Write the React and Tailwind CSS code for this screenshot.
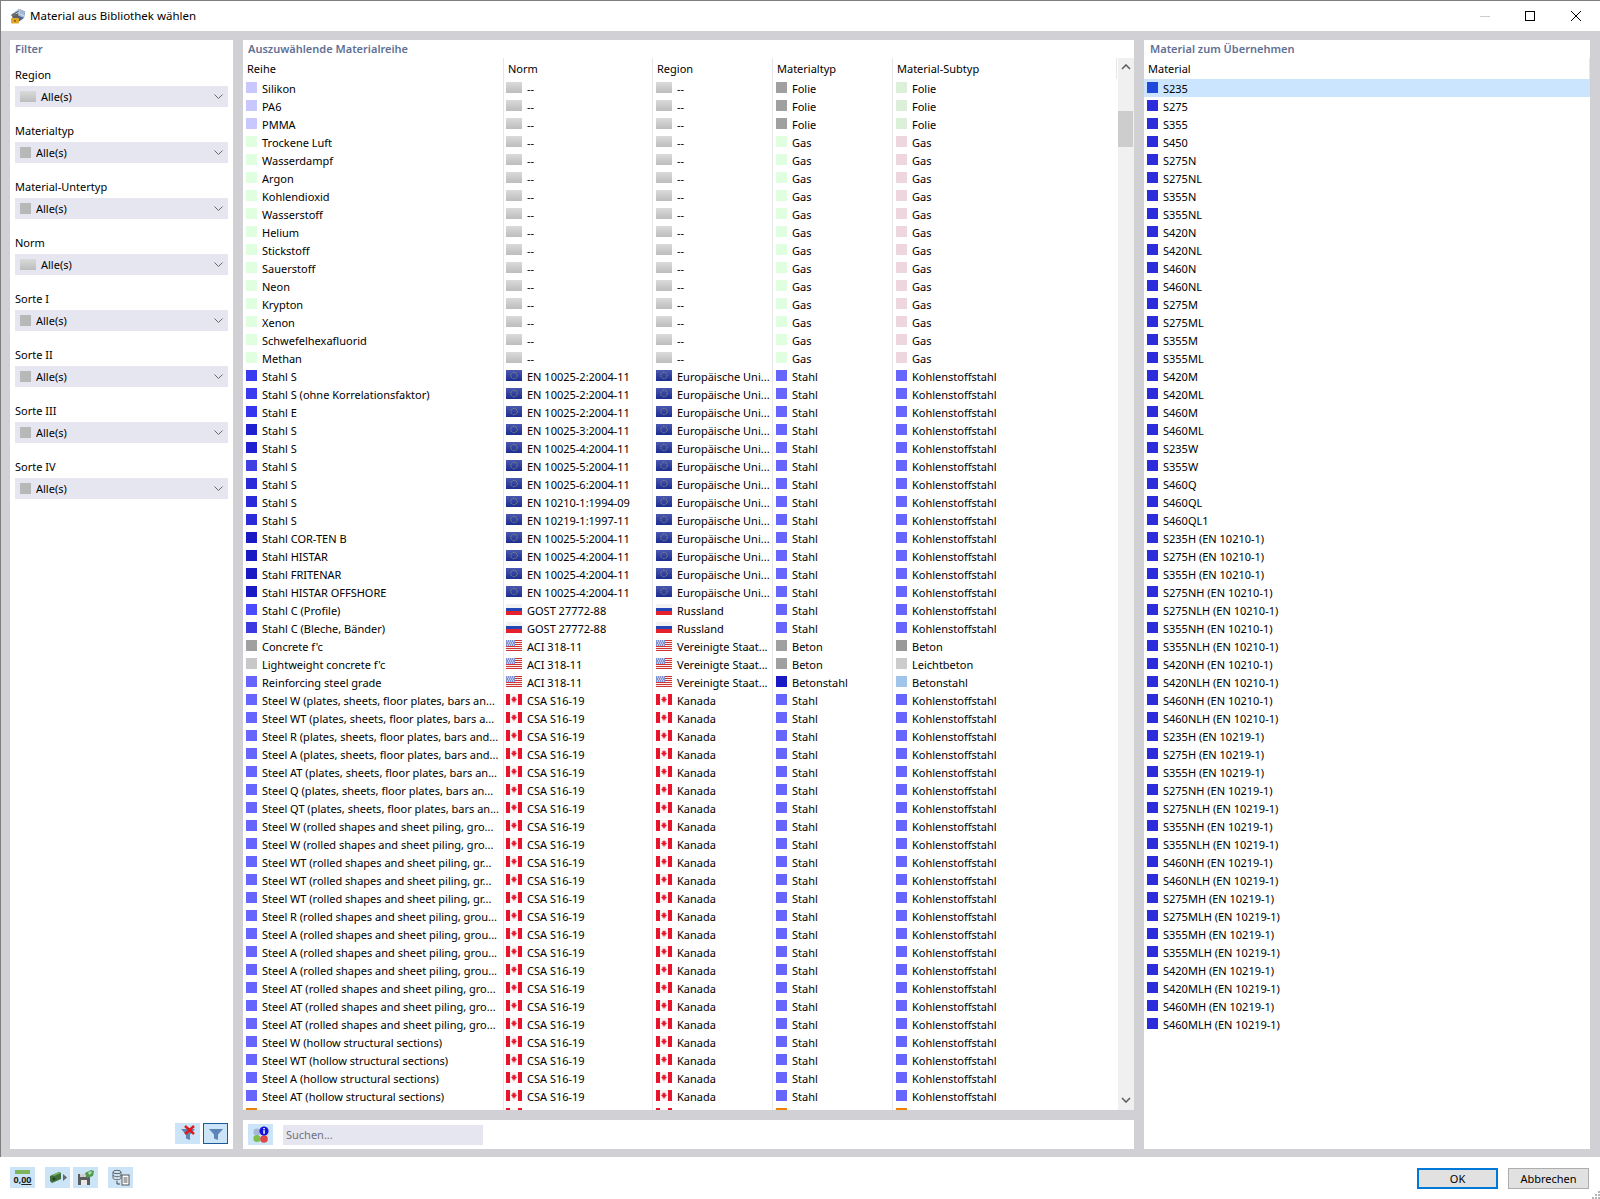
import React from 'react';

const filters = [
  { label: 'Region', icon: 'blank' },
  { label: 'Materialtyp' },
  { label: 'Material-Untertyp' },
  { label: 'Norm', icon: 'blank' },
  { label: 'Sorte I' },
  { label: 'Sorte II' },
  { label: 'Sorte III' },
  { label: 'Sorte IV' },
];

const GAS = ['Trockene Luft', 'Wasserdampf', 'Argon', 'Kohlendioxid', 'Wasserstoff', 'Helium', 'Stickstoff', 'Sauerstoff', 'Neon', 'Krypton', 'Xenon', 'Schwefelhexafluorid', 'Methan'];

const eu = (name, color, norm) => ({ name, color, norm, flag: 'eu', region: 'Europäische Uni...', type: 'Stahl', sub: 'Kohlenstoffstahl' });
const ca = (name) => ({ name, color: '#6666ff', norm: 'CSA S16-19', flag: 'ca', region: 'Kanada', type: 'Stahl', sub: 'Kohlenstoffstahl' });

const rows = [
  ...['Silikon', 'PA6', 'PMMA'].map((name) => ({ name, color: '#c8c8ff', norm: '--', flag: 'blank', region: '--', type: 'Folie', sub: 'Folie' })),
  ...GAS.map((name) => ({ name, color: '#e0ffe0', norm: '--', flag: 'blank', region: '--', type: 'Gas', sub: 'Gas' })),
  eu('Stahl S', '#3a3aee', 'EN 10025-2:2004-11'),
  eu('Stahl S (ohne Korrelationsfaktor)', '#3a3aee', 'EN 10025-2:2004-11'),
  eu('Stahl E', '#3535f0', 'EN 10025-2:2004-11'),
  eu('Stahl S', '#2020d0', 'EN 10025-3:2004-11'),
  eu('Stahl S', '#2020d0', 'EN 10025-4:2004-11'),
  eu('Stahl S', '#4040e0', 'EN 10025-5:2004-11'),
  eu('Stahl S', '#2a2ad8', 'EN 10025-6:2004-11'),
  eu('Stahl S', '#2a2ad8', 'EN 10210-1:1994-09'),
  eu('Stahl S', '#2a2ad8', 'EN 10219-1:1997-11'),
  eu('Stahl COR-TEN B', '#1a1ac4', 'EN 10025-5:2004-11'),
  eu('Stahl HISTAR', '#1a1ac4', 'EN 10025-4:2004-11'),
  eu('Stahl FRITENAR', '#1a1ac4', 'EN 10025-4:2004-11'),
  eu('Stahl HISTAR OFFSHORE', '#1a1ac4', 'EN 10025-4:2004-11'),
  { name: 'Stahl C (Profile)', color: '#4a4aff', norm: 'GOST 27772-88', flag: 'ru', region: 'Russland', type: 'Stahl', sub: 'Kohlenstoffstahl' },
  { name: 'Stahl C (Bleche, Bänder)', color: '#3a3ae0', norm: 'GOST 27772-88', flag: 'ru', region: 'Russland', type: 'Stahl', sub: 'Kohlenstoffstahl' },
  { name: "Concrete f'c", color: '#a0a0a0', norm: 'ACI 318-11', flag: 'us', region: 'Vereinigte Staat...', type: 'Beton', sub: 'Beton' },
  { name: "Lightweight concrete f'c", color: '#c8c8c8', norm: 'ACI 318-11', flag: 'us', region: 'Vereinigte Staat...', type: 'Beton', sub: 'Leichtbeton' },
  { name: 'Reinforcing steel grade', color: '#6666ff', norm: 'ACI 318-11', flag: 'us', region: 'Vereinigte Staat...', type: 'Betonstahl', sub: 'Betonstahl' },
  ...[
    'Steel W (plates, sheets, floor plates, bars an...',
    'Steel WT (plates, sheets, floor plates, bars a...',
    'Steel R (plates, sheets, floor plates, bars and...',
    'Steel A (plates, sheets, floor plates, bars and...',
    'Steel AT (plates, sheets, floor plates, bars an...',
    'Steel Q (plates, sheets, floor plates, bars an...',
    'Steel QT (plates, sheets, floor plates, bars an...',
    'Steel W (rolled shapes and sheet piling, gro...',
    'Steel W (rolled shapes and sheet piling, gro...',
    'Steel WT (rolled shapes and sheet piling, gr...',
    'Steel WT (rolled shapes and sheet piling, gr...',
    'Steel WT (rolled shapes and sheet piling, gr...',
    'Steel R (rolled shapes and sheet piling, grou...',
    'Steel A (rolled shapes and sheet piling, grou...',
    'Steel A (rolled shapes and sheet piling, grou...',
    'Steel A (rolled shapes and sheet piling, grou...',
    'Steel AT (rolled shapes and sheet piling, gro...',
    'Steel AT (rolled shapes and sheet piling, gro...',
    'Steel AT (rolled shapes and sheet piling, gro...',
    'Steel W (hollow structural sections)',
    'Steel WT (hollow structural sections)',
    'Steel A (hollow structural sections)',
    'Steel AT (hollow structural sections)',
  ].map(ca),
  // row cut off by the panel edge, only the top of the swatches shows
  { name: '', color: '#e8820c', norm: '', flag: 'ca', region: '', type: '', sub: '' },
];

const typeColor = { Folie: '#a0a0a0', Gas: '#e0ffe0', Stahl: '#6666ff', Beton: '#a0a0a0', Betonstahl: '#1a1ac4', '': '#f08000' };
const subColor = { Folie: '#dcefd8', Gas: '#eed6de', Kohlenstoffstahl: '#6666ff', Beton: '#999999', Leichtbeton: '#cccccc', Betonstahl: '#a0c4ea', '': '#f08000' };

const h1 = ['S235', 'S275', 'S355', 'S450', 'S275N', 'S275NL', 'S355N', 'S355NL', 'S420N', 'S420NL', 'S460N', 'S460NL', 'S275M', 'S275ML', 'S355M', 'S355ML', 'S420M', 'S420ML', 'S460M', 'S460ML', 'S235W', 'S355W', 'S460Q', 'S460QL', 'S460QL1'];
const h2 = ['S235H', 'S275H', 'S355H', 'S275NH', 'S275NLH', 'S355NH', 'S355NLH', 'S420NH', 'S420NLH', 'S460NH', 'S460NLH'].map((s) => `${s} (EN 10210-1)`);
const h3 = ['S235H', 'S275H', 'S355H', 'S275NH', 'S275NLH', 'S355NH', 'S355NLH', 'S460NH', 'S460NLH', 'S275MH', 'S275MLH', 'S355MH', 'S355MLH', 'S420MH', 'S420MLH', 'S460MH', 'S460MLH'].map((s) => `${s} (EN 10219-1)`);
const materials = [...h1, ...h2, ...h3];

function Flag({ kind }) {
  if (kind === 'blank') {
    return <div className="w-[16px] h-[11px] shrink-0 bg-gradient-to-b from-[#dadada] to-[#bdbdbd]" />;
  }
  if (kind === 'ru') {
    return (
      <svg width="16" height="11" viewBox="0 0 16 11" className="shrink-0">
        <rect width="16" height="4" fill="#f2f2f2" />
        <rect y="4" width="16" height="3" fill="#2447b8" />
        <rect y="7" width="16" height="4" fill="#e3202c" />
      </svg>
    );
  }
  if (kind === 'us') {
    return (
      <svg width="16" height="11" viewBox="0 0 16 11" className="shrink-0">
        <rect width="16" height="11" fill="#f7eeee" />
        <rect y="0" width="16" height="1" fill="#cf3434" />
        <rect y="2" width="16" height="1" fill="#cf3434" />
        <rect y="4" width="16" height="1" fill="#cf3434" />
        <rect y="6" width="16" height="1" fill="#cf3434" />
        <rect y="8" width="16" height="1" fill="#cf3434" />
        <rect y="10" width="16" height="1" fill="#cf3434" />
        <rect width="9" height="6" fill="#8092d2" />
        <path d="M1 1h1M3 1h1M5 1h1M7 1h1M2 3h1M4 3h1M6 3h1M1 5h1M3 5h1M5 5h1M7 5h1" stroke="#ffffff" strokeWidth="1" />
      </svg>
    );
  }
  if (kind === 'ca') {
    return (
      <svg width="16" height="11" viewBox="0 0 16 11" className="shrink-0">
        <rect width="16" height="11" fill="#fbf4f4" />
        <rect width="4" height="11" fill="#e8142c" />
        <rect x="12" width="4" height="11" fill="#e8142c" />
        <path d="M8 2l.8 1.4 1-.4-.3 2 1-.3.3.9-1.3 1 .2.8H8.3V9h-.6V7.4H6.3l.2-.8-1.3-1 .3-.9 1 .3-.3-2 1 .4z" fill="#e8142c" />
      </svg>
    );
  }
  return (
    <svg width="16" height="11" viewBox="0 0 16 11" className="shrink-0">
      <defs>
        <linearGradient id="euBlue" x1="0" y1="0" x2="0" y2="1">
          <stop offset="0" stopColor="#4a58b0" />
          <stop offset="1" stopColor="#1c2d92" />
        </linearGradient>
      </defs>
      <rect width="16" height="11" fill="url(#euBlue)" />
      <circle cx="8" cy="5.5" r="3.2" fill="none" stroke="#9c9a66" strokeWidth="0.9" strokeDasharray="1 0.7" />
    </svg>
  );
}

const Swatch = ({ color }) => (
  <div className="w-[11px] h-[11px] shrink-0" style={{ background: color }} />
);

function Cell({ first, pad, children }) {
  return (
    <div className={`flex items-start overflow-hidden whitespace-nowrap h-[18px] pt-[3px] ${first ? '' : 'border-l border-[#e6e6e6]'} ${pad}`}>
      {children}
    </div>
  );
}

// text sits a little lower than the swatch next to it
const Label = ({ children }) => <span className="leading-[12px] mt-px">{children}</span>;

function Row({ row }) {
  return (
    <div className="grid grid-cols-[260px_149px_120px_120px_226px] h-[18px]">
      <Cell first pad="pl-[3px] gap-[5px]">
        <Swatch color={row.color} />
        <Label>{row.name}</Label>
      </Cell>
      <Cell pad="pl-[2px] gap-[5px]">
        <Flag kind={row.flag} />
        <Label>{row.norm}</Label>
      </Cell>
      <Cell pad="pl-[3px] gap-[5px]">
        <Flag kind={row.flag} />
        <Label>{row.region}</Label>
      </Cell>
      <Cell pad="pl-[3px] gap-[5px]">
        <Swatch color={typeColor[row.type]} />
        <Label>{row.type}</Label>
      </Cell>
      <Cell pad="pl-[3px] gap-[5px]">
        <Swatch color={subColor[row.sub]} />
        <Label>{row.sub}</Label>
      </Cell>
    </div>
  );
}

const Chevron = ({ up, color = '#5f5f5f' }) => (
  <svg width="10" height="6" viewBox="0 0 10 6" fill="none">
    <path d={up ? 'M1 5l4-4 4 4' : 'M1 1l4 4 4-4'} stroke={color} strokeWidth="1.6" />
  </svg>
);

function Combo({ item }) {
  return (
    <div className="h-[21px] bg-[#e6e6f0] flex items-center pl-[5px] pr-[5px] gap-[5px]">
      {item.icon === 'blank' ? <Flag kind="blank" /> : <Swatch color="#b8b8b8" />}
      <span className="flex-1">Alle(s)</span>
      <svg width="9" height="5" viewBox="0 0 9 5" fill="none">
        <path d="M.5.5l4 4 4-4" stroke="#6a6a6a" strokeWidth="1" />
      </svg>
    </div>
  );
}

const PanelTitle = ({ children, className = '' }) => (
  <div className={`h-[18px] leading-[17px] font-semibold text-[#5f7096] ${className}`}>{children}</div>
);

const IconButton = ({ active, children }) => (
  <div className={`w-[25px] h-[21px] flex items-center justify-center bg-[#cce4f7] ${active ? 'border border-[#1a5a96]' : ''}`}>
    {children}
  </div>
);

const Funnel = () => (
  <svg width="16" height="15" viewBox="0 0 16 15">
    <path d="M1 3h14l-5 5.5V14l-4-1.5v-4z" fill="#5c84b8" />
  </svg>
);

function AppIcon() {
  return (
    <svg width="17" height="16" viewBox="0 0 17 16">
      <path d="M2 7l8-6 6 2.5L15 10l-7 5z" fill="#4f6485" />
      <path d="M10 1l6 2.5L15 10 9 7.5z" fill="#a4b8d2" />
      <path d="M4 5l7-3.5M3.5 8L11 3.5M9.5 5.5l6 2.5" stroke="#dfe7f0" strokeWidth="0.8" fill="none" />
      <rect x="2" y="10" width="8" height="5.5" rx="1" fill="#e0a92a" />
      <path d="M4 10V8.5a2 2 0 014 0V10" stroke="#7a6010" fill="none" />
      <rect x="5.2" y="12" width="1.6" height="1.6" fill="#6b5208" />
    </svg>
  );
}

export default function App() {
  return (
    <div className="w-[1600px] h-[1199px] relative flex flex-col bg-white text-[11px] leading-[18px] text-black font-['Noto_Sans','Open_Sans',sans-serif] overflow-hidden">
      <div className="flex flex-col flex-1 min-h-0 border-l border-t border-[#7f7f7f]">
        {/* title bar */}
        <div className="h-[30px] shrink-0 flex items-center pl-[8px] pr-[19px]">
          <AppIcon />
          <span className="ml-[4px] flex-1 text-[11.5px] leading-[32px]">Material aus Bibliothek wählen</span>
          <div className="w-[10px] h-px bg-[#cccccc]" />
          <div className="w-[10px] h-[10px] border border-black ml-[35px]" />
          <svg width="10" height="10" viewBox="0 0 10 10" className="ml-[36px]">
            <path d="M0 0l10 10M10 0L0 10" stroke="#000" strokeWidth="1" />
          </svg>
        </div>

        {/* body */}
        <div className="flex-1 min-h-0 flex gap-[10px] bg-[#d1d0d5] pl-[9px] pr-[10px] pt-[9px] pb-[8px]">
          <div className="w-[223px] shrink-0 bg-white flex flex-col px-[5px]">
            <PanelTitle>Filter</PanelTitle>
            <div className="mt-[7px] flex flex-col gap-[14px]">
              {filters.map((item) => (
                <div key={item.label}>
                  <div className="h-[21px] leading-[20px]">{item.label}</div>
                  <Combo item={item} />
                </div>
              ))}
            </div>
            <div className="mt-auto mb-[5px] flex justify-end gap-[3px]">
              <div className="relative">
                <IconButton><Funnel /></IconButton>
                <svg width="11" height="10" viewBox="0 0 11 10" className="absolute top-[2px] right-[5px]">
                  <path d="M1 1l9 8M10 1L1 9" stroke="#e01818" strokeWidth="2.4" />
                </svg>
              </div>
              <IconButton active><Funnel /></IconButton>
            </div>
          </div>

          <div className="w-[891px] shrink-0 flex flex-col gap-[10px]">
            <div className="h-[1070px] bg-white flex flex-col overflow-hidden">
              <PanelTitle className="pl-[5px]">Auszuwählende Materialreihe</PanelTitle>
              <div className="flex flex-1 min-h-0">
                <div className="w-[875px] overflow-hidden">
                  <div className="grid grid-cols-[260px_149px_120px_120px_226px] h-[21px]">
                    {['Reihe', 'Norm', 'Region', 'Materialtyp', 'Material-Subtyp'].map((col, i) => (
                      <div key={col} className={`h-[21px] leading-[21px] pl-[4px] ${i > 0 ? 'border-l border-[#e6e6e6]' : ''} ${i === 4 ? 'border-r mr-[1px]' : ''}`}>
                        {col}
                      </div>
                    ))}
                  </div>
                  {rows.map((row, i) => (
                    <Row key={i} row={row} />
                  ))}
                </div>
                <div className="w-[16px] bg-[#f0f0f0] flex flex-col">
                  <div className="h-[18px] flex items-center justify-center"><Chevron up /></div>
                  <div className="h-[35px]" />
                  <div className="h-[36px] w-[15px] bg-[#cdcdcd]" />
                  <div className="flex-1" />
                  <div className="h-[18px] mb-[1px] flex items-center justify-center"><Chevron up={false} /></div>
                </div>
              </div>
            </div>

            <div className="h-[29px] bg-white flex items-center pl-[5px] gap-[10px]">
              <IconButton>
                <svg width="18" height="18" viewBox="0 0 18 18">
                  <circle cx="5" cy="6" r="3.6" fill="#a9b6d8" />
                  <circle cx="5" cy="12.5" r="3.6" fill="#7cc04a" />
                  <circle cx="12" cy="13" r="3.8" fill="#e04848" />
                  <circle cx="12" cy="5" r="4.6" fill="#1414e0" />
                  <rect x="11.3" y="4.2" width="1.5" height="3.6" fill="#fff" />
                  <rect x="11.3" y="2" width="1.5" height="1.4" fill="#fff" />
                </svg>
              </IconButton>
              <div className="w-[200px] h-[20px] bg-[#e6e6f0] pl-[3px] leading-[20px] text-[#6f7280]">Suchen...</div>
            </div>
          </div>

          <div className="flex-1 bg-white flex flex-col overflow-hidden">
            <PanelTitle className="pl-[6px]">Material zum Übernehmen</PanelTitle>
            <div className="h-[21px] leading-[21px] pl-[4px] border-r border-[#e6e6e6]">Material</div>
            {materials.map((name, i) => (
              <div key={i} className={`h-[18px] flex items-start pt-[3px] pl-[3px] gap-[5px] whitespace-nowrap ${i === 0 ? 'bg-[#cce5ff]' : ''}`}>
                <Swatch color={i === 0 ? '#1f48dc' : '#2c2cdc'} />
                <Label>{name}</Label>
              </div>
            ))}
          </div>
        </div>
      </div>

      {/* footer */}
      <div className="h-[42px] shrink-0 flex items-start pt-[10px] pl-[10px] pr-[11px]">
        <IconButton>
          <div className="flex flex-col items-center">
            <div className="w-[15px] h-[4px] bg-[#7fb55a]" />
            <span className="text-[9px] leading-[11px] font-bold text-[#222]">0,<span className="underline">00</span></span>
          </div>
        </IconButton>
        <div className="ml-[10px]">
          <IconButton>
            <svg width="18" height="13" viewBox="0 0 18 13">
              <path d="M1 5l9-4 2 1v6l-9 4-2-2z" fill="#3f6f3a" />
              <path d="M3 4l7-3 2 1-7 3z" fill="#75b35c" />
              <circle cx="5" cy="8" r="1.4" fill="#23401f" />
              <path d="M14 3l4 3.5-4 3.5z" fill="#666" />
            </svg>
          </IconButton>
        </div>
        <div className="ml-[3px]">
          <IconButton>
            <svg width="18" height="17" viewBox="0 0 18 17">
              <path d="M1 5h10l2 2v9H1z" fill="#5d5d5d" />
              <rect x="4" y="11" width="6" height="5" fill="#e8e8e8" />
              <rect x="3" y="5" width="6" height="3" fill="#cfcfcf" />
              <path d="M8 4l6-3 3 1-1 5-6 2z" fill="#4f9a50" />
              <path d="M11 3l3-1 1 2-3 2z" fill="#a8dba0" />
            </svg>
          </IconButton>
        </div>
        <div className="ml-[10px]">
          <IconButton>
            <svg width="20" height="18" viewBox="0 0 20 18" fill="none">
              <ellipse cx="6" cy="3" rx="4" ry="1.7" stroke="#666" />
              <path d="M2 3v6c0 1 2 1.7 4 1.7s4-.7 4-1.7V3M2 6c0 1 2 1.7 4 1.7S10 7 10 6" stroke="#666" />
              <path d="M6 12v3h3" stroke="#444" />
              <rect x="11" y="6" width="7" height="10" fill="#fff" stroke="#555" />
              <path d="M12.5 9h4M12.5 11h4M12.5 13h4" stroke="#555" />
            </svg>
          </IconButton>
        </div>
        <div className="ml-auto flex gap-[10px] pt-px">
          <div className="w-[81px] h-[21px] border-2 border-[#0078d7] bg-[#e1e1e1] flex items-center justify-center">OK</div>
          <div className="w-[81px] h-[21px] border border-[#adadad] bg-[#e1e1e1] flex items-center justify-center">Abbrechen</div>
        </div>
      </div>
      <svg width="9" height="9" viewBox="0 0 9 9" className="absolute right-0 bottom-0">
        <path d="M7 1h2v2H7zM4 4h2v2H4zM7 4h2v2H7zM1 7h2v2H1zM4 7h2v2H4zM7 7h2v2H7z" fill="#b5b5b5" />
      </svg>
    </div>
  );
}
